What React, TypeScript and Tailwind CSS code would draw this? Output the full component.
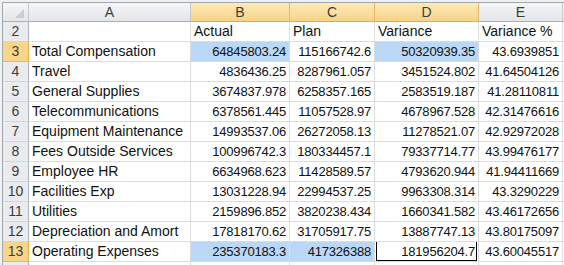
import React from 'react';

// one row of the sheet: label + Actual / Plan / Variance / Variance %
type Row = { n: number; label: string; vals: string[]; sel?: boolean[]; active?: number };

const rows: Row[] = [
  { n: 3, label: 'Total Compensation', vals: ['64845803.24', '115166742.6', '50320939.35', '43.6939851'], sel: [true, false, true, false] },
  { n: 4, label: 'Travel', vals: ['4836436.25', '8287961.057', '3451524.802', '41.64504126'] },
  { n: 5, label: 'General Supplies', vals: ['3674837.978', '6258357.165', '2583519.187', '41.28110811'] },
  { n: 6, label: 'Telecommunications', vals: ['6378561.445', '11057528.97', '4678967.528', '42.31476616'] },
  { n: 7, label: 'Equipment Maintenance', vals: ['14993537.06', '26272058.13', '11278521.07', '42.92972028'] },
  { n: 8, label: 'Fees Outside Services', vals: ['100996742.3', '180334457.1', '79337714.77', '43.99476177'] },
  { n: 9, label: 'Employee HR', vals: ['6634968.623', '11428589.57', '4793620.944', '41.94411669'] },
  { n: 10, label: 'Facilities Exp', vals: ['13031228.94', '22994537.25', '9963308.314', '43.3290229'] },
  { n: 11, label: 'Utilities', vals: ['2159896.852', '3820238.434', '1660341.582', '43.46172656'] },
  { n: 12, label: 'Depreciation and Amort', vals: ['17818170.62', '31705917.75', '13887747.13', '43.80175097'] },
  { n: 13, label: 'Operating Expenses', vals: ['235370183.3', '417326388', '181956204.7', '43.60045517'], sel: [true, true, false, false], active: 2 },
];

const selectedRows = [3, 13];

function ColHead({ label, on }: { label: string; on?: boolean }) {
  return (
    <div
      className={`h-[19px] border-r border-b text-center leading-[18px] text-[14px] text-[#3c3c3c] ${
        on
          ? 'bg-gradient-to-b from-[#fdebb8] to-[#f8d286] border-r-[#e2b868] border-b-[#e9a94a]'
          : 'bg-gradient-to-b from-[#f4f5f7] to-[#e3e5e9] border-r-[#c6c8cc] border-b-[#aab0b8]'
      }`}
    >
      {label}
    </div>
  );
}

function RowHead({ n }: { n?: number }) {
  const on = n !== undefined && selectedRows.includes(n);
  return (
    <div
      className={`h-[20px] border-r border-b text-center leading-[19px] text-[14px] text-[#3c3c3c] ${
        on ? 'bg-[#f9d58a] border-r-[#e9a94a] border-b-[#e2b868]' : 'bg-[#e9ebee] border-r-[#aab0b8] border-b-[#d2d5da]'
      }`}
    >
      {n}
    </div>
  );
}

function Cell({ children, num, sel, active }: { children?: React.ReactNode; num?: boolean; sel?: boolean; active?: boolean }) {
  return (
    <div
      className={`relative h-[20px] border-r border-b border-[#dadcdd] px-[3px] whitespace-nowrap overflow-hidden leading-[19px] text-[#111] ${
        num ? 'text-right text-[13px] tracking-[-0.2px]' : 'text-left text-[14px]'
      } ${sel ? 'bg-[#bad7f6]' : 'bg-white'}`}
    >
      {children}
      {active && <div className="absolute -top-px left-px right-px bottom-0 border border-black" />}
    </div>
  );
}

export default function App() {
  return (
    <div className="w-[564px] h-[265px] overflow-hidden bg-[#eef0f2] pl-[2px] pt-[2px]" style={{ fontFamily: '"Liberation Sans", Arial, sans-serif' }}>
      <div className="grid grid-cols-[26px_162px_99px_85px_104px_84px_1fr] border-l border-t border-[#a3a8ae] bg-white">
        {/* column headers */}
        <div className="relative h-[19px] border-r border-b border-r-[#c6c8cc] border-b-[#aab0b8] bg-gradient-to-b from-[#f4f5f7] to-[#e3e5e9]">
          <svg className="absolute left-[12px] top-[6px]" width="10" height="10" viewBox="0 0 10 10">
            <polygon points="9,0 9,9 0,9" fill="#c9ccd1" />
          </svg>
        </div>
        <ColHead label="A" />
        <ColHead label="B" on />
        <ColHead label="C" on />
        <ColHead label="D" on />
        <ColHead label="E" />
        <ColHead label="" />

        {/* row 2: headings */}
        <RowHead n={2} />
        <Cell />
        <Cell>Actual</Cell>
        <Cell>Plan</Cell>
        <Cell>Variance</Cell>
        <Cell>Variance %</Cell>
        <Cell />

        {rows.map((r) => (
          <React.Fragment key={r.n}>
            <RowHead n={r.n} />
            <Cell>{r.label}</Cell>
            {r.vals.map((v, i) => (
              <Cell key={i} num sel={r.sel?.[i]} active={r.active === i}>
                {v}
              </Cell>
            ))}
            <Cell />
          </React.Fragment>
        ))}

        {/* row 14, only its top edge shows */}
        <RowHead />
        <Cell />
        <Cell />
        <Cell />
        <Cell />
        <Cell />
        <Cell />
      </div>
    </div>
  );
}
